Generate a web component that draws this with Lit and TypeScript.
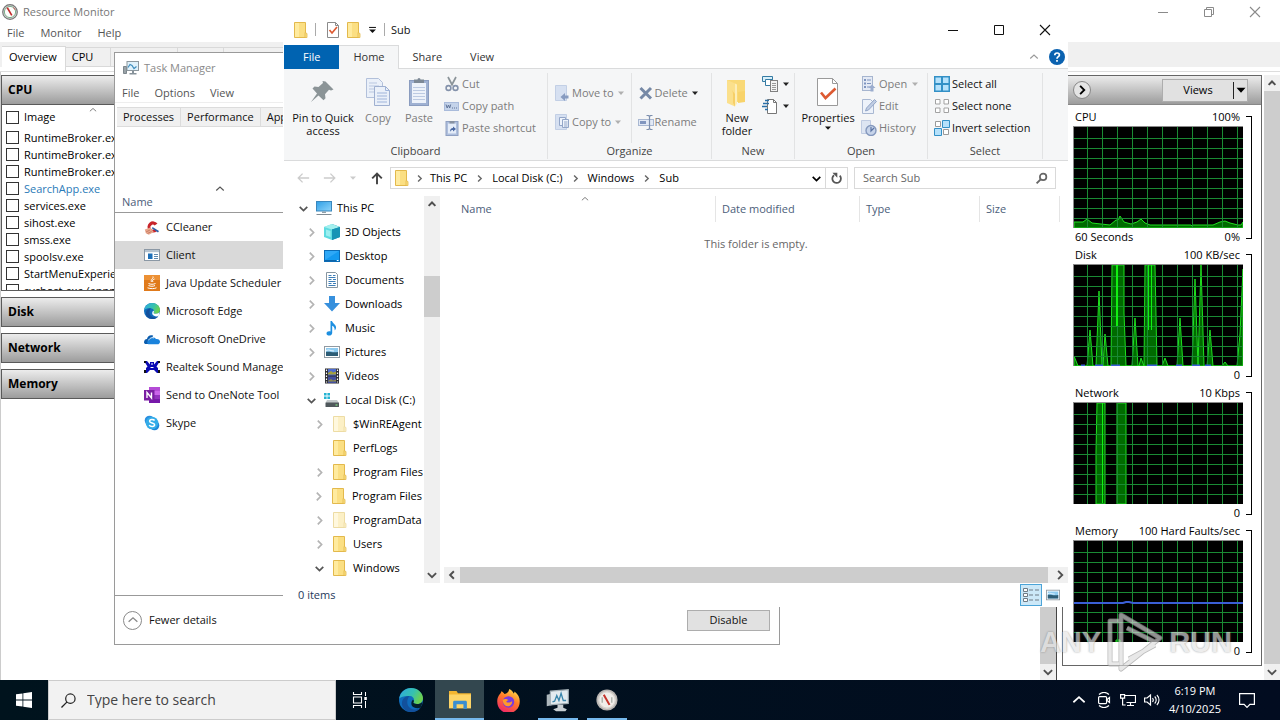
import { LitElement, html, svg, css, nothing } from "lit";
import { customElement, property } from "lit/decorators.js";
import { classMap } from "lit/directives/class-map.js";
import { styleMap } from "lit/directives/style-map.js";

const folder = (a: string, b: string, c: string) => svg`
  <path d="M1.500 .5h11v15h-11z" fill=${a} stroke=${c} stroke-width="1"/>
  <path d="M2 1h4v14h-4z" fill=${b}/>
  <path d="M12 10.500l2 1v4h-2z" fill=${a} stroke=${c} stroke-width=".8"/>`;

const ICONS: Record<string, unknown> = {
  gauge: svg`<circle cx="8" cy="8" r="7.300" fill="#d8d8d8" stroke="#777" stroke-width="1.200"/><circle cx="8" cy="8" r="5.600" fill="#fdfdfb" stroke="#7fae8d" stroke-width="1"/><path d="M4.500 4l1.500-.7 4.500 7.700-1.400.7z" fill="#c22a2a"/><path d="M11.500 3.500l1.600 2.300" stroke="#c55" stroke-width="1"/>`,
  gaugetb: svg`<circle cx="8" cy="8" r="7.700" fill="#b9b5b2"/><circle cx="8" cy="8" r="6" fill="#f1eeea" stroke="#d9d5d0" stroke-width="1"/><path d="M5 4.500l1.300-.7 4.200 7.400-1.300.7z" fill="#c4332a"/><path d="M4.500 6v4M11.500 6v4" stroke="#9aa39b" stroke-width=".8"/>`,
  taskmgr: svg`<path d="M.5 6.500h3v7h-3z" fill="#9aa3a8" stroke="#7d878d"/><rect x="4" y="1.500" width="11.500" height="9" fill="#dff1fb" stroke="#8c979e"/><path d="M5 7.500l2-3 2 1 2 3 2.500-2" fill="none" stroke="#3f8dbd" stroke-width="1.200"/><path d="M9 11h2v2h2.500v1.500h-7v-1.500h2.500z" fill="#87929a"/>`,
  ccleaner: svg`<path d="M13.500 4.500A5.600 5.600 0 1 0 13 12l-2.600-2a2.400 2.400 0 1 1 .2-3.500z" fill="#c8242b"/><path d="M8.500 8l6.500 4-1 1.500-6-4z" fill="#2d5fa8"/><path d="M.8 10.500l5.500-2 3.500 4.500-5 2.800-3-1.500z" fill="#e9a78c"/><path d="M2 13l4-2M3.500 14.500l4-2" stroke="#b96b56" stroke-width=".7"/>`,
  client: svg`<rect x=".5" y="2.500" width="15" height="11" fill="#fff" stroke="#8b98a5"/><path d="M1 3h14v2.200H1z" fill="#b7c4d0"/><rect x="4" y="6.500" width="4.500" height="5.500" fill="#1d6fb8"/><path d="M10 7.500h4M10 9.500h4M10 11.500h4" stroke="#5f88ad"/>`,
  java: svg`<rect width="16" height="16" fill="#e07a1b"/><path d="M0 0h16v5H0z" fill="#ec9034"/><path d="M9 1.500c1 2-3 3-1.500 5.500M10.500 4c-2 .8-2.500 1.500-1.500 3M4.500 8.500c2 1 5 1 7 0M4.500 10.500c2 1 5 1 6.500 0M3.500 12.800c3 1.200 7 1 9 0" fill="none" stroke="#fff" stroke-width="1"/>`,
  edge: svg`<defs><linearGradient id="eg" x1="0" y1="0" x2="1" y2=".4"><stop offset="0" stop-color="#2fa8e0"/><stop offset=".6" stop-color="#35c1b1"/><stop offset="1" stop-color="#6bd151"/></linearGradient></defs><circle cx="8" cy="8" r="8" fill="#0f6cbd"/><path d="M.2 7C.8 3 4 0 8 0c4.600 0 8 3.300 8 6.800 0 2.600-2 3.900-4 3.900-1.800 0-2.800-.6-2.300-1.300.8-1.200.3-3.600-2.200-4C4.500 5 1.500 5.500.2 7z" fill="url(#eg)"/><path d="M5.500 9.500c0 3 2.500 5 5.500 4.900 1.600-.1 2.700-.6 3.500-1.200C13 15.200 10.800 16 8.500 16 4 16 1.500 12.800 2 9.500 2.300 7 4.200 5.400 7 5.300c-1 .9-1.500 2.400-1.500 4.200z" fill="#12509c"/><path d="M9.700 9.400c-.5.700.5 1.300 2.300 1.300 1.500 0 2.900-.5 3.600-1.600-.2 1.600-.6 2.800-1.100 3.900-2 .9-5 .4-6-1.400-.6-1.200-.2-3 .7-3.800.8.300.9 1 .5 1.600z" fill=${"var(--edge-hole, #fff)"}/>`,
  onedrive: svg`<path d="M0 11.500C0 9 1.500 8 3 8c.5-3 3.500-4.500 6.200-3.200L4.500 13H2c-1.200 0-2-.6-2-1.500z" fill="#0b5cad"/><path d="M5 13.300c-2 0-2.700-3.300 0-4.300C6 6 10 5 12 8c2.500-.3 4 1 4 2.700 0 1.500-1 2.600-2.700 2.600z" fill="#1a83dc"/><path d="M4.500 9.300C6 6.500 8.500 6.300 10 7" fill="none" stroke="#fff" stroke-width=".9"/>`,
  realtek: svg`<path d="M0 2h3l3 3.500V3h4v2.500L13 2h3l-3.500 5.500L14 9v2l2 3h-3l-3-3H6l-3 3H0l2-3V9l1.500-1.500z" fill="#0a0ab4"/><path d="M7 5h2M6.500 8.500h3" stroke="#fff" stroke-width="1"/><path d="M0 11h2v3H0zM14 11h2v3h-2zM0 2h2v2H0zM14 2h2v2h-2z" fill="#111"/>`,
  onenote: svg`<rect x="5" y="0" width="11" height="16" fill="#ca64ea"/><path d="M5 0h11v4H5z" fill="#b44bd6"/><path d="M5 8h11v4H5z" fill="#9332bf"/><path d="M5 12h11v4H5z" fill="#7719aa"/><rect y="3" width="10.500" height="10.500" fill="#7a1fa2"/><path d="M3 11V5.500l4.500 5.500V5.500" fill="none" stroke="#fff" stroke-width="1.400"/>`,
  skype: svg`<circle cx="5.500" cy="5.500" r="4.800" fill="#2a8fe0"/><circle cx="10.500" cy="10.500" r="4.800" fill="#1f86d8"/><circle cx="8" cy="8" r="6.300" fill="#34ace8"/><path d="M10.600 5.500C9.500 4 5.600 4 5.600 6.200c0 2.300 5 1.300 5 3.600 0 2.200-4.200 2.200-5.400.4" fill="none" stroke="#fff" stroke-width="1.500"/>`,
  folder: folder("#fbdf83", "#ffeb9f", "#e3b94c"),
  ghost: folder("#fcf0c6", "#fff8de", "#eddca4"),
  check: svg`<path d="M2.500.5h8l3 3v12h-11z" fill="#fff" stroke="#8b8b8b"/><path d="M10.500.5v3h3" fill="none" stroke="#8b8b8b"/><path d="M4.500 8l2.500 3 5-6" fill="none" stroke="#dd5a32" stroke-width="1.700"/>`,
  pc: svg`<defs><linearGradient id="pcg" x1="0" y1="0" x2="1" y2="1"><stop offset="0" stop-color="#2f9fe6"/><stop offset="1" stop-color="#8fd4fa"/></linearGradient></defs><rect x=".5" y="1.500" width="15" height="9.500" fill="url(#pcg)" stroke="#3a87bd"/><path d="M6 11.500h4v1.500H6z" fill="#8fa0ab"/><path d="M.5 14.500h15" stroke="#7f8b93" stroke-width="1"/>`,
  cube: svg`<path d="M0 3l8-3v16l-8-3z" fill="#5edbe0"/><path d="M8 0l8 3v10l-8 3z" fill="#1b8fb0"/><path d="M0 3l8-3 8 3-8 2.500z" fill="#a4f0ee"/><path d="M8 5.500l8-2.500v10l-8 3z" fill="#1794b5"/><path d="M2 5.500l4.500 1.500v6L2 11.500z" fill="#9beff0"/>`,
  desktop: svg`<rect x=".5" y="2.500" width="15" height="11" fill="#149af0" stroke="#0b6bb5"/><path d="M1 3h14L1 12z" fill="#2ea8f7"/><path d="M1 12.500h11" stroke="#0d64a8"/><path d="M13 12.500h1.500" stroke="#fff"/>`,
  docs: svg`<path d="M2.500.5h9l2 2v13h-11z" fill="#fff" stroke="#8796a1"/><path d="M4.500 3.500h3M9 3.500h2.500M4.500 5.500h7M4.500 7.500h3M9 7.500h3M4.500 9.500h7M4.500 11.500h3M9 11.500h3M4.500 13.500h7" stroke="#3c7eb8" stroke-width="1"/>`,
  down: svg`<path d="M5 0h6v7h5l-8 8.500L0 7h5z" fill="#3790dd"/>`,
  music: svg`<path d="M6.500 1h1.500c.5 2.500 4.500 3.500 4 7-.3 1.500-1 2-1.500 2.500.6-2-.5-4-2.300-4.700v7.200c0 3.200-5.700 3.500-5.700.5 0-2 2.200-2.800 4-2z" fill="#1d8fe0"/>`,
  pictures: svg`<rect x=".5" y="2.500" width="15" height="11" fill="#fff" stroke="#909aa2"/><path d="M2 4h12v8H2z" fill="#8ecbf0"/><path d="M2 8c3-1 6 1 12 0v4H2z" fill="#2d5d76"/><path d="M2 6.500c3-1.500 5 .6 8 .5" stroke="#e8f6ff" fill="none"/>`,
  videos: svg`<rect x="1" y=".5" width="14" height="15" fill="#2e2e33"/><rect x="4" y="1" width="8" height="6.500" fill="#4d6bd0"/><rect x="4" y="8.500" width="8" height="6.500" fill="#4350a0"/><path d="M4 5l3-2 2 1.500 3-1v3H4z" fill="#a6a13d"/><path d="M4 13l3-2 2 1.500 3-1v2H4z" fill="#8e8a4b"/><path d="M2.500 1.500v13M13.500 1.500v13" stroke="#fff" stroke-width="1.200" stroke-dasharray="1.500 1.500"/>`,
  drive: svg`<path d="M0 1h2.600v2.600H0zM3.400 1H6v2.600H3.400zM0 4.400h2.600V7H0zM3.400 4.400H6V7H3.400z" fill="#25b4d3"/><path d="M3 8h10l2 3H1.500z" fill="#c3c9cb"/><rect x="1.500" y="10.500" width="13.500" height="4.500" rx=".5" fill="#50585c"/><path d="M11.500 13h2" stroke="#8dfc8d"/>`,
  cut: svg`<path d="M4 1l4.500 8.500M12 1L7.500 9.500" stroke="#8b9499" stroke-width="1.700"/><circle cx="4.500" cy="12" r="2.400" fill="none" stroke="#8492ab" stroke-width="1.600"/><circle cx="11.500" cy="12" r="2.400" fill="none" stroke="#8492ab" stroke-width="1.600"/>`,
  path: svg`<rect x=".5" y="4.500" width="14" height="8" fill="#c4d3ea" stroke="#a9bbdb"/><path d="M2 6.500l1.200 3.500 1.300-3 1.200 3 1-3.500M8 10h1M10 10h1M12 10h1" fill="none" stroke="#5f7398" stroke-width="1"/>`,
  shortcut: svg`<rect x="2" y="1.500" width="12" height="14" fill="#aebfdd" stroke="#8fa0c2"/><rect x="4" y="3.500" width="8" height="10" fill="#e4ecf8"/><path d="M5.500 1h5v2.500h-5z" fill="#8791a0"/><path d="M6 12c0-3 1-4 3-4V6.500l3 2.500-3 2.500V10c-1.500 0-2.300.5-3 2z" fill="#4a68a2"/>`,
  moveto: svg`<path d="M.5.500h11v15h-11z" fill="#d6e0f1" stroke="#c2cfe5"/><path d="M13.500 10.500h-3.500v-2.500l-4.500 4 4.500 4v-2.500h3.500z" fill="#879bc0"/>`,
  copyto: svg`<path d="M.5.500h11v15h-11z" fill="#d6e0f1" stroke="#c2cfe5"/><path d="M4.500 3.500h6v8h-6z" fill="#eef3fb" stroke="#93a6c8"/><path d="M7.500 5.500h6v8h-6z" fill="#eef3fb" stroke="#93a6c8"/><path d="M9 8h3.500M9 10h3.500M9 12h3.500" stroke="#93a6c8"/>`,
  del: svg`<path d="M2.500 3l10.500 10.500M13 3L2.500 13.500" stroke="#7689a6" stroke-width="3"/>`,
  rename: svg`<rect x=".5" y="5.500" width="15" height="6" fill="#e2e9f5" stroke="#a9b8d2"/><rect x="2" y="7" width="6" height="3" fill="#8196bf"/><path d="M8.500 1.500h2l1 1 1-1h2M8.500 15.500h2l1-1 1 1h2M11.500 2.500v12" fill="none" stroke="#7d8fae" stroke-width="1.200"/>`,
  newitem: svg`<path d="M.5.500h10v5h-10z" fill="#d9f0fa" stroke="#357ba3"/><path d="M3.500 3.500h7v6h-7z" fill="#fff" stroke="#357ba3"/><rect x="8.500" y="4.500" width="7" height="11" fill="#f3f3f3" stroke="#808080"/><path d="M10 7.500h4M10 9.500h4M10 11.500h4M10 13.500h4" stroke="#999"/>`,
  easy: svg`<path d="M5.500 1.500h6l3 3v11h-9z" fill="#fff" stroke="#777"/><path d="M11.500 1.500v3h3" fill="none" stroke="#777"/><path d="M1 5.500h6M0 8.500h5M3 11.500h3M3 2.500h4" stroke="#2a6fa8" stroke-width="1.300"/>`,
  open: svg`<rect x="1.500" y=".5" width="10" height="14" fill="#e4eaf5" stroke="#a6b5cf"/><path d="M3 3h2v2H3zM3 6.500h2v2H3zM3 10h2v2H3z" fill="#7f95c0"/><path d="M6 4h4M6 7.500h4M6 11h4" stroke="#7f95c0"/><path d="M11 8.500l3.500 3.500H12.500v3.500h-3V12H7.500z" fill="#9aacce"/>`,
  edit: svg`<path d="M1.500 1.500h8l3 3v11h-11z" fill="#edf2fa" stroke="#a9b8d2"/><path d="M13.500 1.500l2 2-8 8.500-3 1 1-3z" fill="#c0cde3" stroke="#93a6c8"/>`,
  history: svg`<path d="M.5.500h9v13h-9z" fill="#dde5f2" stroke="#bfcbe1"/><circle cx="10" cy="10.500" r="5" fill="#c7d4ea" stroke="#8498bd" stroke-width="1.400"/><path d="M10 7v4l3-3" fill="none" stroke="#5b74a3" stroke-width="1.200"/>`,
  selall: svg`<path d="M0 0h16v16H0z" fill="#3390c6"/><path d="M1.500 1.500H7V7H1.500zM9 1.500h5.500V7H9zM1.500 9H7v5.500H1.500zM9 9h5.500v5.500H9z" fill="#b5e1fb"/>`,
  selnone: svg`<path d="M1.500 1.500h4.500v4.500H1.500zM10 1.500h4.500v4.500H10zM1.500 10h4.500v4.500H1.500zM10 10h4.500v4.500H10z" fill="#fff" stroke="#a2a2a2"/>`,
  selinv: svg`<path d="M1.500 1.500h5v5h-5zM9.500 9.500h5v5h-5z" fill="#fff" stroke="#9a9a9a"/><path d="M8.500.5h7v7h-7zM.5 8.500h7v7h-7z" fill="#b5e1fb" stroke="#3390c6"/>`,
  up: svg`<path d="M3.500 10.500l4.500-4.500 4.500 4.500" fill="none" stroke="currentColor" stroke-width="2.600"/>`,
  dn: svg`<path d="M2.500 5.500L8 11l5.500-5.500" fill="none" stroke="currentColor" stroke-width="2.500"/>`,
  lt: svg`<path d="M10.500 3L5.500 8l5 5" fill="none" stroke="currentColor" stroke-width="2.600"/>`,
  rt: svg`<path d="M5.500 2.500L11 8l-5.500 5.500" fill="none" stroke="currentColor" stroke-width="2.500"/>`,
  thinup: svg`<path d="M3 10l5-4.500 5 4.500" fill="none" stroke="currentColor" stroke-width="1.500"/>`,
  caret: svg`<path d="M2 5h12L8 11.500z" fill="currentColor"/>`,
  back: svg`<path d="M15 8H2.500M7.500 3l-5 5 5 5" fill="none" stroke="currentColor" stroke-width="1.500"/>`,
  fwd: svg`<path d="M1 8h12.500M8.500 3l5 5-5 5" fill="none" stroke="currentColor" stroke-width="1.500"/>`,
  upto: svg`<path d="M8 15V3M2.500 8.500L8 3l5.500 5.500" fill="none" stroke="currentColor" stroke-width="2.200"/>`,
  reload: svg`<path d="M12 4.500A5.300 5.300 0 1 1 5 3.900" fill="none" stroke="currentColor" stroke-width="2.200"/><path d="M3 1h6v6z" fill="currentColor"/>`,
  lens: svg`<circle cx="10" cy="6" r="4" fill="none" stroke="currentColor" stroke-width="2.100"/><path d="M7.500 8.500L2 14" stroke="currentColor" stroke-width="2.400"/>`,
  biglens: svg`<circle cx="10" cy="6" r="5" fill="none" stroke="currentColor" stroke-width="1.300"/><path d="M6.500 9.500L.5 15.500" stroke="currentColor" stroke-width="1.400"/>`,
  min: svg`<path d="M3 8.500h10" stroke="currentColor"/>`,
  max: svg`<path d="M3.500 3.500h9v9h-9z" fill="none" stroke="currentColor"/>`,
  restore: svg`<path d="M3.500 5.500h7v7h-7zM5.500 5.500v-2h7v7h-2" fill="none" stroke="currentColor"/>`,
  close: svg`<path d="M3 3l10 10M13 3L3 13" stroke="currentColor" stroke-width="1.100"/>`,
  qat: svg`<path d="M3 5h10" stroke="currentColor" stroke-width="1.500"/><path d="M3 8h10l-5 5z" fill="currentColor"/>`,
  help: svg`<circle cx="8" cy="8" r="8" fill="#0b62b0"/><path d="M5.800 6.200c0-3 4.600-2.800 4.600-.2C10.400 7.700 8 7.700 8 9.700M8 11v1.800" fill="none" stroke="#fff" stroke-width="1.700"/>`,
  details: svg`<path d="M.5 1.500h4v3h-4zM.5 6.500h4v3h-4zM.5 11.500h4v3h-4z" fill="#fff" stroke="#6e7b85"/><path d="M6 3h4M12 3h4M6 8h4M12 8h4M6 13h4M12 13h4" stroke="#6e7b85" stroke-width="1"/>`,
  win: svg`<path d="M0 2.300l6.500-.9v6.200H0zM7.300 1.200L16 0v7.600H7.300zM0 8.400h6.500v6.200L0 13.700zM7.300 8.400H16V16l-8.700-1.200z" fill="#fff"/>`,
  taskview: svg`<path d="M1.500 0v2.500h8V0M1.500 16v-2.500h8V16M1.500 5h8v6h-8z" fill="none" stroke="#fff" stroke-width="1.100"/><path d="M13.500 0v4M13.500 9v7" stroke="#fff" stroke-width="1"/><path d="M12.300 5h2.500v3h-2.500z" fill="#fff"/>`,
  explorer: svg`<path d="M0 1.500h5.500l1 1.500H16v11H0z" fill="#f3b530"/><path d="M0 4h16v10H0z" fill="#fdd467"/><path d="M3 14.500V9.500c0-.6.4-1 1-1h8c.6 0 1 .4 1 1v5h-2.500V11h-5v3.500z" fill="#3b8ed0"/>`,
  firefox: svg`<defs><linearGradient id="ff" x1=".8" y1="0" x2=".3" y2="1"><stop offset="0" stop-color="#ffe14a"/><stop offset=".45" stop-color="#ff7a28"/><stop offset="1" stop-color="#f0246a"/></linearGradient></defs><path d="M2 3.500C2.500 3 3 2 3 1.500c1 .5 1.800 1.200 2.200 2C7 3 8 2.500 8.500 0c2 1 2.700 2 3 3.200.6-.4.7-1 .7-1.400C15 4 16 6.500 15.800 9A7.800 7.800 0 0 1 .2 9C0 7 .8 5 2 3.500z" fill="url(#ff)"/><circle cx="8" cy="9" r="4" fill="#7a3be0"/><path d="M4 7.500c1.500-1 3-.5 4 .3-1 .2-1.500.8-1.500 1.200.8.7 3 .6 4-.6.3 2.600-1.600 3.800-3.300 3.600C5 11.700 4 9.800 4 7.500z" fill="#ff9a2a"/>`,
  tasktb: svg`<path d="M.5 4l5-1v8l-5 1z" fill="#aeb8bd"/><path d="M3 1.500l12.500-1v9.500L3 11z" fill="#e3ebef" stroke="#a3afb5" stroke-width=".8"/><path d="M4.500 9l1.500-.5 1.500-4 1.500 3.500 1.500-5 1.500 5h2" fill="none" stroke="#3b86ab" stroke-width=".9"/><path d="M8 11h4v2l2.500 1-1 1.500H7l-2-1.500 3-1z" fill="#c7ced2"/>`,
  meet: svg`<path d="M3 2.500c3-2.500 7-2.500 10 0M3 13.500c3 2.500 7 2.500 10 0" fill="none" stroke="#fff" stroke-width="1.200"/><rect x="2.600" y="4.600" width="8" height="7" rx="1" fill="none" stroke="#fff" stroke-width="1.200"/><path d="M10.500 8l3-2.500v5z" fill="none" stroke="#fff" stroke-width="1.200"/>`,
  net: svg`<path d="M4.500 3.500h11v7h-9M10.500 10.500v3M7 13.500h7" fill="none" stroke="#fff" stroke-width="1.200"/><path d="M.6 2.600h4v3.500h-4zM2.600 6v7h3" fill="none" stroke="#fff" stroke-width="1.200"/>`,
  sound: svg`<path d="M.6 6h2.500L6.500 3v10L3.100 10H.6z" fill="none" stroke="#fff" stroke-width="1.200"/><path d="M8.500 6c1 1.200 1 2.800 0 4M10.700 4.500c2 2 2 5 0 7M12.900 3c2.800 2.800 2.800 7.200 0 10" fill="none" stroke="#fff" stroke-width="1.100"/>`,
  note: svg`<path d="M.6 1.600h14.800v10.800h-4.500L8 15.400l-2.900-3H.6z" fill="none" stroke="#fff" stroke-width="1.200"/>`,
  pin: svg`<path d="M18.500 5.500l8 8-2.500 1-2-.7-4 4.500.5 4-2 2L11.500 19.500 4 26l6-8.500-4.500-5 2-2 4 .5 4.500-4 -.5-2z" fill="#8b9497"/>`,
  copy: svg`<path d="M4.500 2.500h12l4 4v15h-16z" fill="#eaf0f9" stroke="#b2c0da"/><path d="M7 7h8M7 10h10M7 13h10M7 16h10" stroke="#b9c7e0"/><path d="M12.500 10.500h11l4 4v15h-15z" fill="#eaf0f9" stroke="#9fb0d0"/><path d="M23.500 10.500v4h4M15 17h10M15 20h10M15 23h10M15 26h10" fill="none" stroke="#9fb4da"/>`,
  paste: svg`<rect x="6.500" y="4.500" width="19" height="25" fill="#9fb1d2" stroke="#8a9cbf"/><rect x="9" y="7" width="14" height="20" fill="#edf2fa"/><path d="M10 11.500h12M10 14.500h12M10 17.500h12M10 20.500h12M10 23.500h12" stroke="#bccae2"/><path d="M11 3.500h3.500a1.500 1.500 0 0 1 3 0H21V7H11z" fill="#7d8996"/>`,
  bigfolder: svg`<path d="M6 4h18v22H6z" fill="#f9d977"/><path d="M17 16l7-1v11l-7 1z" fill="#f8d36a"/><path d="M6 4l8 3.500V30.500l-8-3.500z" fill="#fbe08c"/><path d="M14 7.500l2 1v19l-2 3z" fill="#fdeeb9"/><path d="M10 13c3 3 2 8 2 14l2 3.500V18z" fill="#f6cf67"/>`,
  bigcheck: svg`<path d="M5.500 2.500h15l5 5v22h-20z" fill="#fff" stroke="#9a9a9a"/><path d="M20.500 2.500v5h5" fill="none" stroke="#9a9a9a"/><path d="M9 16.500l4.500 5.500 10-9.500" fill="none" stroke="#dd5a32" stroke-width="2.600"/>`,
};

const icon = (name: string, size = 16, box = 16) =>
  html`<svg class="ico" width=${size} height=${size} viewBox="0 0 ${box} ${box}" aria-hidden="true">${ICONS[name]}</svg>`;

const base = css`
  * { box-sizing: border-box; }
  button, input { font: inherit; color: inherit; }
  button { border: 0; padding: 0; margin: 0; background: none; white-space: nowrap; }
  .ico { flex: none; display: block; }
`;

@customElement("scroll-strip")
class ScrollStrip extends LitElement {
  @property({ type: Boolean, reflect: true }) horizontal = false;
  @property({ type: Number }) before = 0;
  @property({ type: Number }) thumb = 1;
  @property({ type: Number }) after = 0;
  static styles = [base, css`
    :host { display: flex; flex-direction: column; flex: none; width: 16px; background: #f0f0f0; color: #505050; }
    :host([horizontal]) { flex-direction: row; width: auto; height: 16px; }
    .arrow { display: grid; place-items: center; flex: none; width: 16px; height: 16px; }
    .thumb { background: #cdcdcd; }
  `];
  render() {
    return html`
      <button class="arrow" aria-label="Scroll back">${icon(this.horizontal ? "lt" : "up", 12)}</button>
      <div style=${styleMap({ flexGrow: String(this.before) })}></div>
      <div class="thumb" style=${styleMap({ flexGrow: String(this.thumb) })}></div>
      <div style=${styleMap({ flexGrow: String(this.after) })}></div>
      <button class="arrow" aria-label="Scroll forward">${icon(this.horizontal ? "rt" : "dn", 12)}</button>`;
  }
}

interface Chart { name: string; top: string; left: string; bottom: string; area?: string; blue?: string; accent?: string }
const CHARTS: Chart[] = [
  { name: "CPU", top: "100%", left: "60 Seconds", bottom: "0%",
    area: "M1 102V96L10 96 14 93 19 97 28 98 37 99 43 94 45 94 47 90 51 96 58 98 64 96 68 93 72 97 77 99 118 99 119 100 120 99 140 99 147 96 152 95 157 97 165 99 168 99 170 96V102Z" },
  { name: "Disk", top: "100 KB/sec", left: "", bottom: "0",
    area: "M1 102V92L5 102H14L17 66 20 102H23L26 27 29 102H30L32 70 35 102H38L39 1H51L51 49 53 102H59L62 54 65 102H66L68 94 71 102H71L72 1H82L84 102H89L92 94 95 102H104L107 54 110 102H119L122 15 125 102 128 1 131 102H134L137 66 140 102H149L152 98 155 102H164L167 70 170 5V102Z",
    accent: "M43.500 1V62M44.500 1V62M75.500 1V66M78.500 1V66", blue: "M8 101.500h4M22 101.500h8M38 101.500h9M74 101.500h10M103 101.500h6M119 101.500h8M132 101.500h6" },
  { name: "Network", top: "10 Kbps", left: "", bottom: "0",
    area: "M23 102V50L24 1H32V102ZM44 102V1H53V102Z", accent: "M29.500 1V101" },
  { name: "Memory", top: "100 Hard Faults/sec", left: "", bottom: "0",
    area: "M43 102v-2h4v2z", blue: "M1 63H50L53 62H56L60 63H170" },
];

@customElement("resource-chart")
class ResourceChart extends LitElement {
  @property({ attribute: false }) chart!: Chart;
  static styles = [base, css`
    :host { display: grid; grid-template-columns: 1fr 6px; column-gap: 3px; }
    .line { display: flex; justify-content: space-between; height: 18px; line-height: 18px; padding: 0 3px 0 2px; }
    .plot { display: block; width: 100%; height: 102px; background: #000; }
    .bracket { margin: 8px 0 7px; border: solid #000; border-width: 1px 1px 1px 0; }
  `];
  render() {
    const c = this.chart;
    const xs = Array.from({ length: 11 }, (_, i) => 14.5 + i * 15);
    const ys = Array.from({ length: 9 }, (_, i) => 12.5 + i * 10);
    return html`
      <div>
        <div class="line"><span>${c.name}</span><span>${c.top}</span></div>
        <svg class="plot" viewBox="0 0 170 102" preserveAspectRatio="none" role="img" aria-label=${c.name}>
          ${c.area ? svg`<path d=${c.area} fill="#006a00" stroke="#1fe01f" stroke-width="1"/>` : nothing}
          ${xs.map((x) => svg`<path d="M${x} 1V102" stroke="#1a8a34" stroke-width="1"/>`)}
          ${ys.map((y) => svg`<path d="M1 ${y}H170" stroke="#1a8a34" stroke-width="1"/>`)}
          ${c.accent ? svg`<path d=${c.accent} stroke="#12f012" stroke-width="1"/>` : nothing}
          ${c.blue ? svg`<path d=${c.blue} fill="none" stroke="#3b5fd6" stroke-width="2"/>` : nothing}
          <path d="M0 .5H170M.5 0V102" stroke="#8a8a8a" fill="none"/>
        </svg>
        <div class="line"><span>${c.left}</span><span>${c.bottom}</span></div>
      </div>
      <div class="bracket"></div>`;
  }
}

@customElement("resource-monitor")
class ResourceMonitor extends LitElement {
  static styles = [base, css`
    :host { display: flex; flex-direction: column; background: #fff; color: #000; }
    .title { display: flex; align-items: center; gap: 5px; height: 23px; padding-left: 2px; color: #777; }
    .title .name { flex: 1; }
    .ctl { display: grid; place-items: center; width: 46px; height: 22px; color: #8a8a8a; }
    .controls { display: flex; padding-right: 2px; }
    .menu { display: flex; gap: 16px; height: 19px; padding-left: 7px; color: #555; line-height: 19px; }
    .tabs { display: flex; align-items: flex-end; height: 29px; padding-left: 2px; background: #f0f0f0; border-bottom: 4px solid #fff; }
    .tab { height: 20px; padding: 0 17px 0 6px; border: 1px solid #d9d9d9; border-left: 0; background: #f0f0f0; }
    .tab.on { height: 25px; margin-bottom: -4px; padding: 0 8px 4px 7px; background: #fff; border-bottom: 0; }
    .main { flex: 1; display: flex; min-height: 0; border-top: 1px solid #ddd; }
    .left { flex: 1; display: flex; min-width: 0; border-left: 1px solid #ccc; border-right: 1px solid #444; }
    .cards { flex: 1; display: flex; flex-direction: column; gap: 6px; padding: 3px 10px 0 0; min-width: 0; }
    .head { display: flex; align-items: center; height: 30px; padding-left: 6px; border: 1px solid #5a5a5a; background: linear-gradient(#ececec, #9c9c9c); font-size: 12px; font-weight: 700; }
    .table { height: 186px; overflow: hidden; border: solid #5a5a5a; border-width: 0 1px 1px; }
    .proc, .cols { display: flex; align-items: center; gap: 5px; height: 17px; padding-left: 4px; }
    .cols { height: 24px; }
    .cols .ico { align-self: flex-start; margin-left: 27px; color: #777; }
    .box { appearance: none; width: 13px; height: 13px; margin: 0; border: 1px solid #333; background: #fff; }
    .hot { color: #2a7ab8; }
    .right { display: flex; gap: 2px; padding: 3px 0 0 5px; }
    .panel { width: 200px; margin-bottom: 14px; border: 1px solid #666; }
    .bar { display: flex; align-items: center; justify-content: space-between; height: 29px; padding: 0 13px 0 10px; background: linear-gradient(#ececec, #9c9c9c); border-bottom: 1px solid #888; }
    .go { display: grid; place-items: center; width: 18px; height: 18px; border: 1px solid #888; border-radius: 50%; background: #e4e4e4; }
    .views { display: flex; align-items: center; height: 23px; border: 1px solid #adadad; background: #e1e1e1; }
    .views .txt { width: 70px; }
    .views .drop { display: grid; place-items: center; height: 17px; width: 14px; border-left: 1px solid #222; }
    .charts { padding: 3px 9px 0 10px; }
  `];
  render() {
    const procs = ["RuntimeBroker.exe", "RuntimeBroker.exe", "RuntimeBroker.exe", "SearchApp.exe", "services.exe", "sihost.exe", "smss.exe", "spoolsv.exe", "StartMenuExperienceHost.exe", "svchost.exe (appmodel)"];
    return html`
      <header class="title">${icon("gauge")}<span class="name">Resource Monitor</span>
        <div class="controls">
          <button class="ctl" aria-label="Minimize">${icon("min")}</button>
          <button class="ctl" aria-label="Restore">${icon("restore")}</button>
          <button class="ctl" aria-label="Close">${icon("close")}</button>
        </div>
      </header>
      <nav class="menu"><button>File</button><button>Monitor</button><button>Help</button></nav>
      <div class="tabs">${["Overview", "CPU", "Memory", "Disk", "Network"].map((t, i) => html`<button class=${classMap({ tab: true, on: i === 0 })}>${t}</button>`)}</div>
      <div class="main">
        <div class="left">
          <div class="cards">
            <section>
              <div class="head">CPU</div>
              <div class="table">
                <div class="cols"><input class="box" type="checkbox" id="all"><label for="all">Image</label>${icon("thinup", 10)}</div>
                ${procs.map((p, i) => html`<div class="proc"><input class="box" type="checkbox" id="p${i}"><label class=${classMap({ hot: p === "SearchApp.exe" })} for="p${i}">${p}</label></div>`)}
              </div>
            </section>
            ${["Disk", "Network", "Memory"].map((t) => html`<div class="head">${t}</div>`)}
          </div>
          <scroll-strip .thumb=${1}></scroll-strip>
        </div>
        <div class="right">
          <div class="panel">
            <div class="bar"><button class="go" aria-label="Collapse">${icon("rt", 12)}</button>
              <button class="views"><span class="txt">Views</span><span class="drop">${icon("caret", 12)}</span></button></div>
            <div class="charts">${CHARTS.map((c) => html`<resource-chart .chart=${c}></resource-chart>`)}</div>
          </div>
          <scroll-strip .thumb=${1}></scroll-strip>
        </div>
      </div>`;
  }
}

@customElement("task-manager")
class TaskManager extends LitElement {
  static styles = [base, css`
    :host { display: flex; flex-direction: column; background: #fff; border: 1px solid #9a9a9a; color: #111; }
    .title { display: flex; align-items: center; gap: 5px; height: 30px; padding-left: 8px; color: #8a8a8a; }
    .menu { display: flex; gap: 15px; height: 20px; padding-left: 7px; color: #555; border-bottom: 1px solid #eee; }
    .tabs { display: flex; margin-top: 4px; padding-left: 2px; height: 20px; }
    .tab { padding: 0 6px; border: solid #dcdcdc; border-width: 1px 1px 1px 0; background: #f0f0f0; }
    .cols { display: flex; flex-direction: column; justify-content: flex-end; height: 86px; padding: 0 0 3px 7px; border-bottom: 1px solid #999; color: #4c607a; line-height: 14px; }
    .cols .ico { margin-left: 92px; color: #555; }
    .rows { flex: 1; margin: 0; padding: 0; list-style: none; }
    .row { display: flex; align-items: center; gap: 6px; height: 28px; padding-left: 29px; }
    .row.on { background: #d9d9d9; }
    .foot { display: flex; align-items: center; justify-content: space-between; height: 49px; padding: 0 9px 0 8px; border-top: 1px solid #999; }
    .fewer { display: flex; align-items: center; gap: 7px; }
    .ring { display: grid; place-items: center; width: 19px; height: 19px; border: 1px solid #8a8a8a; border-radius: 50%; color: #888; }
    .disable { width: 83px; height: 21px; border: 1px solid #adadad; background: #e1e1e1; }
  `];
  render() {
    const rows = [["ccleaner", "CCleaner"], ["client", "Client"], ["java", "Java Update Scheduler"], ["edge", "Microsoft Edge"], ["onedrive", "Microsoft OneDrive"], ["realtek", "Realtek Sound Manager"], ["onenote", "Send to OneNote Tool"], ["skype", "Skype"]];
    return html`
      <header class="title">${icon("taskmgr")}<span>Task Manager</span></header>
      <nav class="menu"><button>File</button><button>Options</button><button>View</button></nav>
      <div class="tabs">${["Processes", "Performance", "App history", "Startup"].map((t) => html`<button class="tab">${t}</button>`)}</div>
      <div class="cols">${icon("thinup", 12)}<span>Name</span></div>
      <ul class="rows">${rows.map(([i, t]) => html`<li class=${classMap({ row: true, on: t === "Client" })}>${icon(i)}<span>${t}</span></li>`)}</ul>
      <footer class="foot"><button class="fewer"><span class="ring">${icon("thinup", 14)}</span>Fewer details</button><button class="disable">Disable</button></footer>`;
  }
}

@customElement("file-explorer")
class FileExplorer extends LitElement {
  static styles = [base, css`
    :host { display: flex; flex-direction: column; background: #fff; color: #111; padding-left: 1px; }
    .title { display: flex; align-items: center; height: 31px; padding-left: 9px; }
    .title .name { flex: 1; }
    .vr { width: 1px; height: 13px; margin: 0 6px; background: #aaa; }
    .qat { display: flex; align-items: center; gap: 5px; padding-left: 3px; }
    .ctl { display: grid; place-items: center; width: 46px; height: 30px; }
    .controls { display: flex; }
    .tabs { display: flex; align-items: center; height: 24px; border-bottom: 1px solid #dadbdc; }
    .tab { height: 24px; padding: 0 14px; color: #333; }
    .tab.file { padding: 0 19px; background: #0063b1; color: #fff; }
    .tab.on { padding: 0 13px 0 14px; background: #f5f6f7; border: solid #dadbdc; border-width: 1px 1px 0 0; }
    .tools { display: flex; gap: 9px; margin-left: auto; padding-right: 3px; color: #999; align-items: center; }
    .ribbon { display: grid; grid-template-columns: 264px 164px 83px 133px 115px; height: 92px; background: #f5f6f7; border-bottom: 1px solid #dadbdc; }
    .group { display: flex; flex-direction: column; margin: 4px 0 1px; border-right: 1px solid #e2e3e4; }
    .body { flex: 1; display: flex; padding-left: 3px; }
    .cap { text-align: center; line-height: 16px; color: #444; }
    .big { display: flex; flex-direction: column; align-items: center; height: 64px; padding-top: 3px; line-height: 13px; white-space: pre-line; }
    .big .ico { margin-bottom: 3px; }
    .off { color: #7c7c7c; }
    .w72 { width: 72px; } .w38 { width: 38px; } .w44 { width: 44px; } .w60 { width: 60px; }
    .stack { display: flex; flex-direction: column; padding-left: 3px; }
    .stack.two { padding: 5px 6px 0 4px; }
    .stack.rule { border-left: 1px solid #e2e3e4; padding-left: 6px; }
    .small { display: flex; align-items: center; gap: 2px; height: 22px; }
    .two .small { gap: 1px; height: 29px; }
    .small .ico + .ico, .small span + .ico { margin-left: 2px; }
    .address { display: flex; align-items: center; height: 35px; padding: 0 12px 1px; color: #444; }
    .hist { display: flex; align-items: center; justify-content: space-between; width: 88px; margin-right: 6px; }
    .faint { color: #ccc; }
    .crumbs { flex: 1; display: flex; align-items: center; height: 22px; padding-left: 3px; border: 1px solid #d9d9d9; color: #000; }
    .sep { display: grid; place-items: center; width: 25px; color: #666; }
    .sep.first { width: 19px; margin-right: 1px; }
    .spacer { flex: 1; }
    .refresh { display: grid; place-items: center; width: 22px; height: 20px; border-left: 1px solid #d9d9d9; margin-left: 3px; color: #555; }
    .search { display: flex; align-items: center; width: 202px; height: 22px; margin-left: 6px; padding: 0 7px 0 8px; border: 1px solid #d9d9d9; color: #666; }
    .search input { flex: 1; min-width: 0; border: 0; padding: 0; outline: 0; background: none; }
    .search input::placeholder { color: #666; opacity: 1; }
    .content { flex: 1; display: flex; min-height: 0; }
    .tree { width: 140px; margin: 0; padding: 0; list-style: none; overflow: hidden; color: #000; }
    .node { display: flex; align-items: center; height: 24px; white-space: nowrap; }
    .tw { display: grid; place-items: center; width: 12px; margin-right: 7px; color: #b4b4b4; }
    .tw.opened { color: #555; }
    .lbl { margin-left: 5px; }
    .files { flex: 1; display: flex; flex-direction: column; min-width: 0; padding-left: 4px; }
    .cols { display: grid; grid-template-columns: 272px 144px 120px 80px; height: 26px; color: #4c607a; }
    .col { position: relative; text-align: left; padding-left: 6px; border-right: 1px solid #e5e5e5; }
    .col:first-child { padding-left: 17px; }
    .sort { position: absolute; left: 50%; top: -2px; color: #777; }
    .empty { flex: 1; margin: 0; padding-top: 14px; text-align: center; color: #666; }
    .status { display: flex; align-items: center; height: 24px; padding: 0 5px 0 14px; color: #1e395b; }
    .status span { flex: 1; }
    .view { display: grid; place-items: center; width: 21px; height: 22px; }
    .view.on { width: 22px; border: 1px solid #4ba4d8; background: #cce8f8; }
  `];
  small(i: string, t: string, off = true, caret = "") {
    return html`<button class=${classMap({ small: true, off })} aria-label=${t}>${icon(i)}${i === "newitem" || i === "easy" ? nothing : html`<span>${t}</span>`}${caret ? html`<svg class="ico" width="8" height="8" viewBox="0 0 8 8"><path d="M1 2.500h6l-3 3.500z" fill=${caret}/></svg>` : nothing}</button>`;
  }
  big(i: string, t: string, w: string, off = false, caret = false) {
    return html`<button class=${classMap({ big: true, off, [w]: true })}>${icon(i, 32, 32)}<span>${t}</span>${caret ? icon("caret", 8) : nothing}</button>`;
  }
  render() {
    const tree: [number, string, string, string][] = [
      [0, "open", "pc", "This PC"], [1, "shut", "cube", "3D Objects"], [1, "shut", "desktop", "Desktop"], [1, "shut", "docs", "Documents"],
      [1, "shut", "down", "Downloads"], [1, "shut", "music", "Music"], [1, "shut", "pictures", "Pictures"], [1, "shut", "videos", "Videos"],
      [1, "open", "drive", "Local Disk (C:)"], [2, "shut", "ghost", "$WinREAgent"], [2, "", "folder", "PerfLogs"], [2, "shut", "folder", "Program Files"],
      [2, "shut", "folder", "Program Files (x86)"], [2, "shut", "ghost", "ProgramData"], [2, "shut", "folder", "Users"], [2, "open", "folder", "Windows"],
    ];
    const crumbs = ["This PC", "Local Disk (C:)", "Windows", "Sub"];
    return html`
      <header class="title">${icon("folder")}<i class="vr"></i>
        <div class="qat">${icon("check")}${icon("folder")}${icon("qat", 11)}</div><i class="vr"></i><span class="name">Sub</span>
        <div class="controls">
          <button class="ctl" aria-label="Minimize">${icon("min")}</button>
          <button class="ctl" aria-label="Maximize">${icon("max")}</button>
          <button class="ctl" aria-label="Close">${icon("close")}</button>
        </div>
      </header>
      <div class="tabs">
        <button class="tab file">File</button><button class="tab on">Home</button><button class="tab">Share</button><button class="tab">View</button>
        <div class="tools"><button aria-label="Collapse ribbon">${icon("thinup", 12)}</button><button aria-label="Help">${icon("help")}</button></div>
      </div>
      <div class="ribbon">
        <section class="group"><div class="body">
          ${this.big("pin", "Pin to Quick\naccess", "w72")}${this.big("copy", "Copy", "w38", true)}${this.big("paste", "Paste", "w44", true)}
          <div class="stack">${this.small("cut", "Cut")}${this.small("path", "Copy path")}${this.small("shortcut", "Paste shortcut")}</div>
        </div><div class="cap">Clipboard</div></section>
        <section class="group"><div class="body">
          <div class="stack two">${this.small("moveto", "Move to", true, "#b0b0b0")}${this.small("copyto", "Copy to", true, "#b0b0b0")}</div>
          <div class="stack two rule">${this.small("del", "Delete", true, "#222")}${this.small("rename", "Rename")}</div>
        </div><div class="cap">Organize</div></section>
        <section class="group"><div class="body">
          ${this.big("bigfolder", "New\nfolder", "w44")}
          <div class="stack">${this.small("newitem", "New item", false, "#222")}${this.small("easy", "Easy access", false, "#222")}</div>
        </div><div class="cap">New</div></section>
        <section class="group"><div class="body">
          ${this.big("bigcheck", "Properties", "w60", false, true)}
          <div class="stack">${this.small("open", "Open", true, "#b0b0b0")}${this.small("edit", "Edit")}${this.small("history", "History")}</div>
        </div><div class="cap">Open</div></section>
        <section class="group"><div class="body">
          <div class="stack">${this.small("selall", "Select all", false)}${this.small("selnone", "Select none", false)}${this.small("selinv", "Invert selection", false)}</div>
        </div><div class="cap">Select</div></section>
      </div>
      <div class="address">
        <div class="hist">
          <button class="faint" aria-label="Back">${icon("back", 14)}</button><button class="faint" aria-label="Forward">${icon("fwd", 14)}</button>
          <button class="faint" aria-label="Recent">${icon("caret", 8)}</button><button aria-label="Up">${icon("upto", 14)}</button>
        </div>
        <nav class="crumbs">${icon("folder")}
          ${crumbs.map((c, i) => html`<span class=${classMap({ sep: true, first: i === 0 })}>${icon("rt", 9)}</span><button>${c}</button>`)}
          <span class="spacer"></span><button aria-label="History">${icon("dn", 11)}</button><button class="refresh" aria-label="Refresh">${icon("reload", 13)}</button>
        </nav>
        <div class="search"><input type="text" placeholder="Search Sub" aria-label="Search Sub">${icon("lens", 13)}</div>
      </div>
      <div class="content">
        <ul class="tree">${tree.map(([l, s, i, t]) => html`<li class="node" style=${styleMap({ paddingLeft: `${13 + l * 8}px` })}>
          <span class=${classMap({ tw: true, opened: s === "open" })}>${s ? icon(s === "open" ? "dn" : "rt", 11) : nothing}</span>${icon(i)}<span class="lbl">${t}</span></li>`)}</ul>
        <scroll-strip .before=${64} .thumb=${41} .after=${250}></scroll-strip>
        <div class="files">
          <div class="cols"><button class="col">Name<span class="sort">${icon("thinup", 10)}</span></button><button class="col">Date modified</button><button class="col">Type</button><button class="col">Size</button></div>
          <p class="empty">This folder is empty.</p>
          <scroll-strip horizontal .thumb=${580} .after=${4}></scroll-strip>
        </div>
      </div>
      <footer class="status"><span>0 items</span><button class="view on" aria-label="Details">${icon("details")}</button><button class="view" aria-label="Large icons">${icon("pictures", 14)}</button></footer>`;
  }
}

@customElement("task-bar")
class TaskBar extends LitElement {
  static styles = [base, css`
    :host { display: flex; height: 40px; background: linear-gradient(90deg, #00131d, #020c20); color: #fff; --edge-hole: #04202c; }
    .app { display: grid; place-items: center; width: 49px; border-bottom: 2px solid transparent; border-top: 2px solid transparent; }
    .start { width: 48px; }
    .view { width: 50px; padding-right: 2px; }
    .run { position: relative; }
    .run::after { content: ""; position: absolute; left: 5px; right: 4px; bottom: -2px; height: 2px; background: #76b9ed; }
    .on { background-color: #33474f; }
    .on::after { left: 0; right: 0; }
    .search { display: flex; align-items: center; gap: 11px; width: 288px; padding-left: 12px; border: 1px solid #ccc; background: #f2f2f2; color: #222; font-size: 14px; }
    .search input { flex: 1; min-width: 0; border: 0; padding: 0; outline: 0; background: none; }
    .search input::placeholder { color: #444; opacity: 1; }
    .tray { display: flex; align-items: center; gap: 8px; margin-left: auto; }
    .clock { line-height: 18px; text-align: center; padding: 0 10px 0 1px; }
    .note { padding-right: 25px; }
  `];
  render() {
    return html`
      <button class="app start" aria-label="Start">${icon("win")}</button>
      <div class="search">${icon("biglens", 15)}<input type="text" placeholder="Type here to search" aria-label="Type here to search"></div>
      <button class="app view" aria-label="Task view">${icon("taskview")}</button>
      <button class="app" aria-label="Microsoft Edge">${icon("edge", 24)}</button>
      <button class="app run on" aria-label="File Explorer">${icon("explorer", 22)}</button>
      <button class="app" aria-label="Firefox">${icon("firefox", 23)}</button>
      <button class="app run" aria-label="Task Manager">${icon("tasktb", 23)}</button>
      <button class="app run" aria-label="Resource Monitor">${icon("gaugetb", 22)}</button>
      <div class="tray">
        <button aria-label="Show hidden icons">${icon("thinup", 18)}</button><button aria-label="Meet now">${icon("meet")}</button>
        <button aria-label="Network">${icon("net")}</button><button aria-label="Volume">${icon("sound")}</button>
        <div class="clock">6:19 PM<br>4/10/2025</div>
        <button class="note" aria-label="Notifications">${icon("note")}</button>
      </div>`;
  }
}

@customElement("app-root")
class AppRoot extends LitElement {
  static styles = [base, css`
    :host { display: flex; flex-direction: column; height: 100vh; overflow: hidden; font: 11px/16px "Open Sans", "Noto Sans", sans-serif; background: #fff; }
    .desktop { position: relative; flex: 1; min-height: 0; display: flex; }
    .monitor { flex: 1; min-width: 0; }
    .tasks { position: absolute; left: 114px; top: 52px; width: 666px; height: 593px; }
    .explorer { position: absolute; left: 283px; top: 14px; width: 785px; height: 593px; }
    .mark { position: absolute; right: 48px; bottom: 8px; display: flex; align-items: center; gap: 6px; opacity: .65; color: #e4e4e4; font: 700 29px/60px "Liberation Sans Narrow", "Liberation Sans", sans-serif; text-shadow: 0 0 2px #666; pointer-events: none; }
  `];
  render() {
    return html`
      <main class="desktop">
        <resource-monitor class="monitor"></resource-monitor>
        <task-manager class="tasks"></task-manager>
        <file-explorer class="explorer"></file-explorer>
        <div class="mark"><span>ANY</span>
          <svg width="56" height="60" viewBox="0 0 56 60" fill="none" stroke-linejoin="round"><path d="M14 3L53 26 14 57zM14 9H3V52H12M20 16L48 30M22 47L48 33" stroke="#999" stroke-width="5"/><path d="M14 3L53 26 14 57zM14 9H3V52H12M20 16L48 30M22 47L48 33" stroke="#ddd" stroke-width="3.500"/></svg>
          <span>RUN</span></div>
      </main>
      <task-bar></task-bar>`;
  }
}
